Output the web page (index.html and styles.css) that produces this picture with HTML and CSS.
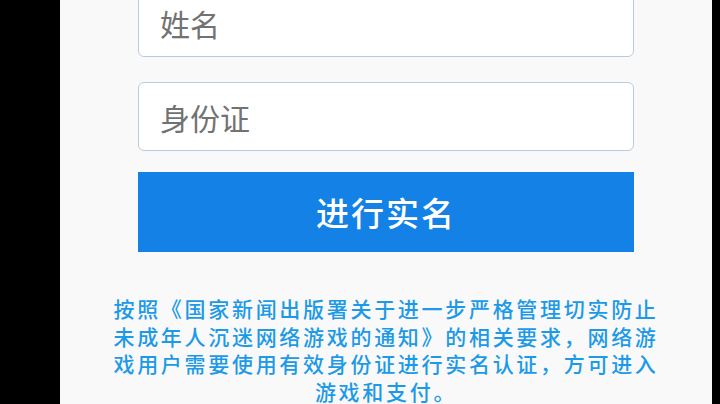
FILE: index.html
```html
<!DOCTYPE html>
<html lang="zh-CN">
<head>
<meta charset="utf-8">
<title>实名认证</title>
<link rel="stylesheet" href="styles.css">
</head>
<body>
<div class="screen">
  <div class="panel">
    <form class="form">
      <div class="field field-first"><span class="placeholder">姓名</span></div>
      <div class="field"><span class="placeholder">身份证</span></div>
      <button type="button" class="submit">进行实名</button>
    </form>
    <p class="notice">按照《国家新闻出版署关于进一步严格管理切实防止未成年人沉迷网络游戏的通知》的相关要求，网络游戏用户需要使用有效身份证进行实名认证，方可进入游戏和支付。</p>
  </div>
</div>
</body>
</html>
```

FILE: styles.css
```css
html, body {
  margin: 0;
  padding: 0;
  background: #000;
  height: 404px;
  overflow: hidden;
}
.screen {
  display: flex;
  height: 404px;
  padding-left: 60px;
}
.panel {
  width: 652px;
  height: 404px;
  background: #f9f9fa;
  display: flex;
  flex-direction: column;
  align-items: center;
  font-family: "Noto Sans CJK SC", "Noto Sans", sans-serif;
  overflow: hidden;
}
.form {
  width: 496px;
  display: flex;
  flex-direction: column;
  margin: 0;
}
.field {
  box-sizing: border-box;
  height: 69px;
  background: #fff;
  border: 1px solid #b7cddf;
  border-radius: 6px;
  display: flex;
  align-items: center;
  padding-left: 21px;
  margin-bottom: 25px;
}
.field-first {
  margin-top: -12px;
}
.field + .field {
  margin-bottom: 21px;
}
.placeholder {
  font-size: 30px;
  color: #727272;
  line-height: 1;
}
.submit {
  height: 80px;
  border: 0;
  border-radius: 0;
  background: #1381e5;
  color: #fff;
  font-family: "Noto Sans CJK SC", "Noto Sans", sans-serif;
  font-size: 33px;
  font-weight: 500;
  letter-spacing: 2px;
  padding: 0;
  display: flex;
  align-items: center;
  justify-content: center;
}
.notice {
  width: 552px;
  margin: 43px 0 0;
  font-size: 21px;
  font-weight: 500;
  letter-spacing: 2.7px;
  line-height: 27.7px;
  color: #1c9ae7;
  text-align: center;
}
```
